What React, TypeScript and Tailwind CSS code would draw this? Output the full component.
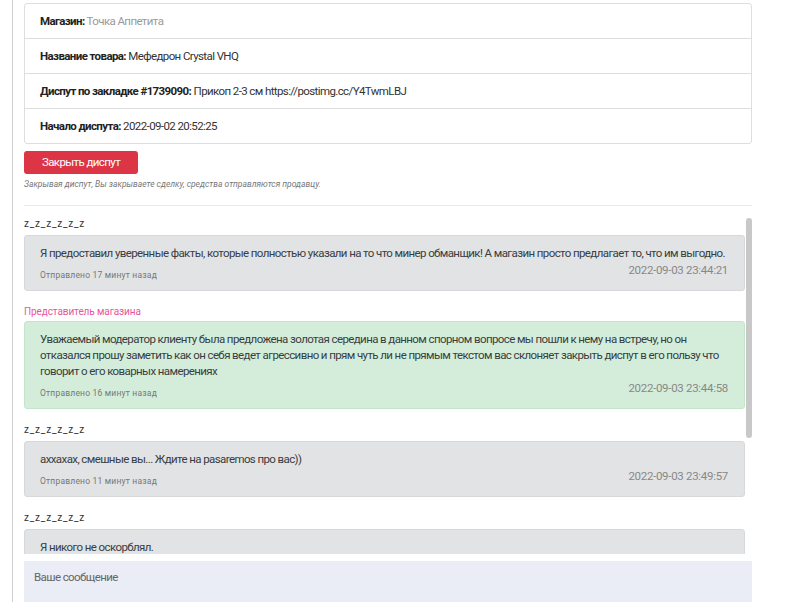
import React from "react";

type Message = {
  author: string;
  seller?: boolean;
  text: string;
  date: string;
  ago: string;
};

const messages: Message[] = [
  {
    author: "z_z_z_z_z_z",
    text: "Я предоставил уверенные факты, которые полностью указали на то что минер обманщик! А магазин просто предлагает то, что им выгодно.",
    date: "2022-09-03 23:44:21",
    ago: "Отправлено 17 минут назад",
  },
  {
    author: "Представитель  магазина",
    seller: true,
    text: "Уважаемый модератор клиенту была предложена золотая середина в данном спорном вопросе мы пошли к нему на встречу, но он отказался прошу заметить как он себя ведет агрессивно и прям чуть ли не прямым текстом вас склоняет закрыть диспут в его пользу что говорит о его коварных намерениях",
    date: "2022-09-03 23:44:58",
    ago: "Отправлено 16 минут назад",
  },
  {
    author: "z_z_z_z_z_z",
    text: "аххахах, смешные вы... Ждите на pasaremos про вас))",
    date: "2022-09-03 23:49:57",
    ago: "Отправлено 11 минут назад",
  },
  {
    author: "z_z_z_z_z_z",
    text: "Я никого не оскорблял.",
    date: "2022-09-03 23:52:10",
    ago: "Отправлено 8 минут назад",
  },
];

// the original face is narrow, so Roboto is squeezed a little
const tight = "text-[11.5px] tracking-[-0.6px]";

function InfoRow({ label, value, muted }: { label: string; value: string; muted?: boolean }) {
  return (
    <div className={`border-b border-[#dedede] last:border-b-0 pl-[15px] py-[8px] leading-[18px] ${tight}`}>
      <span className="font-bold text-[#222]">{label}</span>{" "}
      <span className={muted ? "text-[#9a9a9a]" : "text-[#333]"}>{value}</span>
    </div>
  );
}

function Bubble({ m }: { m: Message }) {
  return (
    <div className="mb-[14px]">
      <div
        className={`text-[10px] leading-[14px] ${
          m.seller ? "mb-[2px] text-[#e8559a] tracking-[-0.1px]" : "mb-[4px] text-[#333] tracking-[0.8px]"
        }`}
      >
        {m.author}
      </div>
      <div
        className={`rounded-[3px] border pl-[15px] pr-[16px] pt-[9px] pb-[10px] ${
          m.seller ? "bg-[#d4edda] border-[#c3e6cb]" : "bg-[#e2e3e5] border-[#d6d8db]"
        }`}
      >
        <p className={`leading-[16px] text-[#383d41] ${tight}`}>{m.text}</p>
        <div className="mt-[2px] flex items-start justify-between">
          <span className="mt-[7px] text-[8.5px] leading-[10px] tracking-[0.2px] text-[#777]">{m.ago}</span>
          <span className="text-[11.5px] leading-[14px] tracking-[-0.3px] text-[#888]">{m.date}</span>
        </div>
      </div>
    </div>
  );
}

export default function App() {
  return (
    <div
      className="h-[602px] overflow-hidden bg-white pl-3"
      style={{ fontFamily: "Roboto, 'Liberation Sans', sans-serif" }}
    >
      <div className="h-full border-l border-[#cfcfcf] pl-[11px] pt-[3px]">
        <div className="w-[728px]">
          {/* Dispute info */}
          <div className="rounded-[3px] border border-[#dedede]">
            <InfoRow label="Магазин:" value="Точка Аппетита" muted />
            <InfoRow label="Название товара:" value="Мефедрон Crystal VHQ" />
            <InfoRow label="Диспут по закладке #1739090:" value="Прикоп 2-3 см https://postimg.cc/Y4TwmLBJ" />
            <InfoRow label="Начало диспута:" value="2022-09-02 20:52:25" />
          </div>

          <button className={`mt-[7px] h-[23px] w-[114px] rounded-[3px] bg-[#dc3545] text-white ${tight}`}>
            Закрыть диспут
          </button>
          <p className="mt-[5px] text-[8.5px] leading-[10px] italic text-[#777]">
            Закрывая диспут, Вы закрываете сделку, средства отправляются продавцу.
          </p>

          <div className="mt-[16px] border-t border-[#e6eaf1]" />

          {/* Chat with scrollbar */}
          <div className="mt-[11px] flex h-[337px] gap-px">
            <div className="flex-1 overflow-hidden">
              {messages.map((m, i) => (
                <Bubble key={i} m={m} />
              ))}
            </div>
            <div className="w-[6px] pt-[1px]">
              <div className="h-[220px] rounded-[3px] bg-[#c8c8c8]" />
            </div>
          </div>

          <textarea
            placeholder="Ваше сообщение"
            className={`mt-[7px] block h-[60px] w-full resize-none bg-[#eaedf6] px-[10px] py-[8px] leading-[16px] text-[#333] placeholder:text-[#666] outline-none ${tight}`}
          />
        </div>
      </div>
    </div>
  );
}
